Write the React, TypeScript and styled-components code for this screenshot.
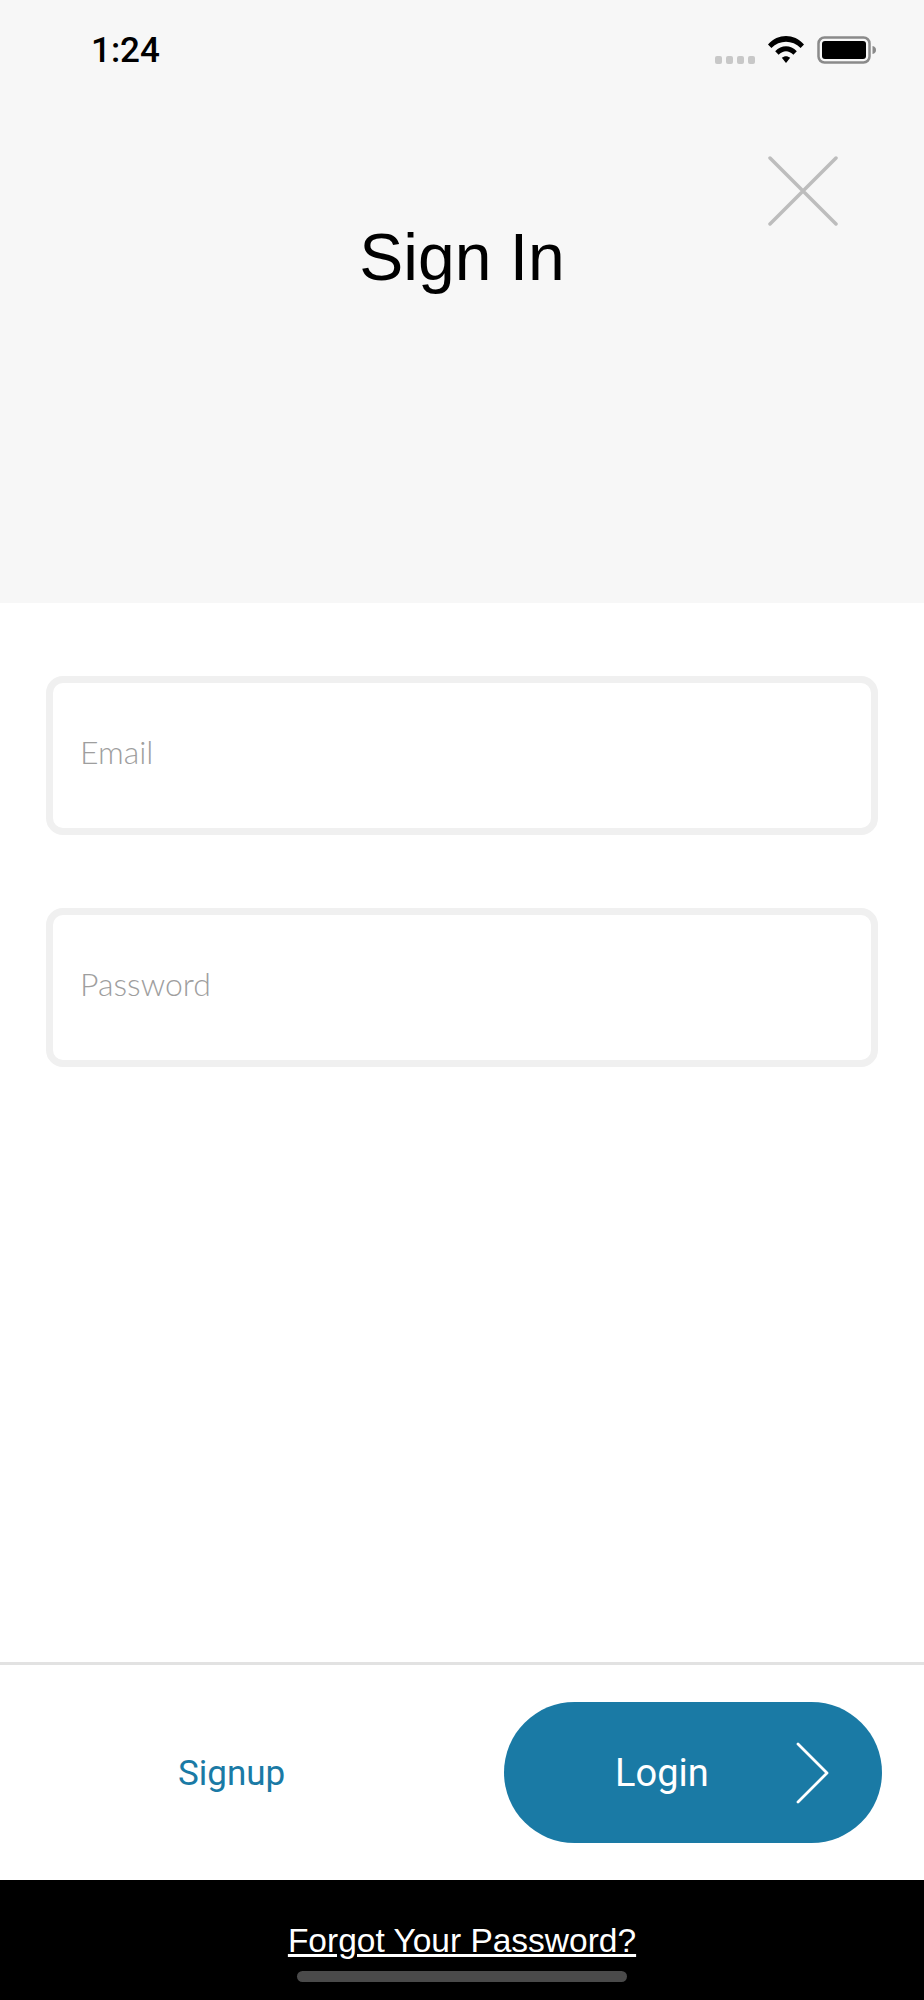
import styled, { createGlobalStyle } from 'styled-components';

const GlobalStyle = createGlobalStyle`
   html, body {
      margin: 0;
      padding: 0;
      background: #fff;
   }
   * {
      box-sizing: border-box;
   }
`

const Page = styled.div`
   width: 924px;
   height: 2000px;
   display: flex;
   flex-direction: column;
   overflow: hidden;
`
const Header = styled.header`
   height: 603px;
   flex: none;
   background: #f7f7f7;
`
const StatusBar = styled.div`
   height: 100px;
   padding: 32px 48px 0 91px;
   display: flex;
   justify-content: space-between;
   align-items: flex-start;
`
const Time = styled.span`
   font-family: Roboto, "Liberation Sans", sans-serif;
   font-weight: 500;
   font-size: 35px;
   line-height: 38px;
   color: #000;
`
const StatusIcons = styled.div`
   display: flex;
   align-items: flex-start;
   padding-top: 4px;
`
const Signal = styled.div`
   display: flex;
   gap: 4px;
   margin: 20px 13px 0 0;
`
const SignalDot = styled.i`
   width: 7px;
   height: 8px;
   border-radius: 2px;
   background: #c8c8c8;
`
const Wifi = styled.svg`
   width: 36px;
   height: 27px;
   margin-right: 13px;
`
const Battery = styled.svg`
   width: 59px;
   height: 28px;
`
const TitleRow = styled.div`
   display: grid;
   grid-template-columns: 1fr auto 1fr;
   padding: 0 86px;
`
const Title = styled.h1`
   grid-column: 2;
   margin: 120px 0 0;
   font-family: "Liberation Sans", Arial, sans-serif;
   font-weight: 400;
   font-size: 66px;
   line-height: 74px;
   color: #000;
`
const CloseIcon = styled.svg`
   grid-column: 3;
   justify-self: end;
   width: 70px;
   height: 70px;
   margin-top: 56px;
`
const Form = styled.form`
   flex: 1;
   padding: 73px 46px 0;
   display: flex;
   flex-direction: column;
   gap: 73px;
`
const Field = styled.input`
   display: block;
   width: 832px;
   height: 159px;
   padding: 0 0 8px 27px;
   border: 7px solid #f0f0f0;
   border-radius: 17px;
   background: #fff;
   outline: none;
   font-family: Lato, "Open Sans", sans-serif;
   font-weight: 300;
   font-size: 32px;
   color: #333;

   &::placeholder {
      color: #9e9e9e;
      opacity: 1;
   }
`
const ActionBar = styled.div`
   height: 218px;
   flex: none;
   padding: 37px 42px 0 0;
   border-top: 3px solid #e2e2e2;
   display: grid;
   grid-template-columns: 1fr 378px;
   align-items: start;
`
const SignupLink = styled.a`
   justify-self: start;
   margin: 52px 0 0 178px;
   font-family: Roboto, Inter, sans-serif;
   font-weight: 400;
   font-size: 35px;
   line-height: 40px;
   color: #1a7aa5;
`
const LoginButton = styled.button`
   height: 141px;
   padding: 0 52px 0 111px;
   border: 0;
   border-radius: 71px;
   background: #1a7aa5;
   display: flex;
   align-items: center;
   justify-content: space-between;
   font-family: Roboto, Inter, sans-serif;
   font-weight: 400;
   font-size: 38px;
   color: #fff;
`
const Chevron = styled.svg`
   width: 34px;
   height: 62px;
`
const BottomBar = styled.footer`
   height: 120px;
   flex: none;
   background: #000;
   display: flex;
   flex-direction: column;
   align-items: center;
   padding-top: 41px;
`
const ForgotLink = styled.a`
   font-family: "Liberation Sans", Arial, sans-serif;
   font-size: 33.500px;
   line-height: 40px;
   color: #fff;
   text-decoration: underline;
`
const HomeIndicator = styled.div`
   width: 330px;
   height: 11px;
   margin-top: 10px;
   border-radius: 6px;
   background: #4a4a4a;
`

export default function App() {
   return (<>
      <GlobalStyle />
      <Page>
         <Header>
            <StatusBar>
               <Time>1:24</Time>
               <StatusIcons>
                  <Signal>
                     <SignalDot />
                     <SignalDot />
                     <SignalDot />
                     <SignalDot />
                  </Signal>
                  <Wifi viewBox="0 0 36 27">
                     <path d="M0 8.5C10-2.8 26-2.8 36 8.5L32.6 12C24.400 3.600 11.600 3.600 3.400 12Z" fill="#000" />
                     <path d="M7.200 15.300C13.400 8.500 22.600 8.500 28.800 15.300L25.400 18.700C20.800 14 15.200 14 10.600 18.700Z" fill="#000" />
                     <path d="M13.800 21.800C16.400 19.600 19.600 19.600 22.200 21.800L18 27Z" fill="#000" />
                  </Wifi>
                  <Battery viewBox="0 0 59 28">
                     <rect x="1.500" y="1.500" width="51" height="25" rx="6" fill="none" stroke="#8a8a8a" strokeWidth="2.500" />
                     <rect x="5" y="5" width="44" height="18" rx="3" fill="#000" />
                     <path d="M55.500 10C58 10.500 59 12 59 14S58 17.500 55.500 18Z" fill="#8a8a8a" />
                  </Battery>
               </StatusIcons>
            </StatusBar>
            <TitleRow>
               <Title>Sign In</Title>
               <CloseIcon viewBox="0 0 70 70">
                  <path d="M2 2L68 68M68 2L2 68" stroke="#bdbdbd" strokeWidth="3.500" strokeLinecap="round" />
               </CloseIcon>
            </TitleRow>
         </Header>
         <Form>
            <Field type="email" placeholder="Email" />
            <Field type="password" placeholder="Password" />
         </Form>
         <ActionBar>
            <SignupLink>Signup</SignupLink>
            <LoginButton type="button">
               Login
               <Chevron viewBox="0 0 34 62">
                  <path d="M2 2L31 31L2 60" fill="none" stroke="#fff" strokeWidth="2.800" strokeLinecap="round" strokeLinejoin="round" />
               </Chevron>
            </LoginButton>
         </ActionBar>
         <BottomBar>
            <ForgotLink>Forgot Your Password?</ForgotLink>
            <HomeIndicator />
         </BottomBar>
      </Page>
   </>
   )
}
